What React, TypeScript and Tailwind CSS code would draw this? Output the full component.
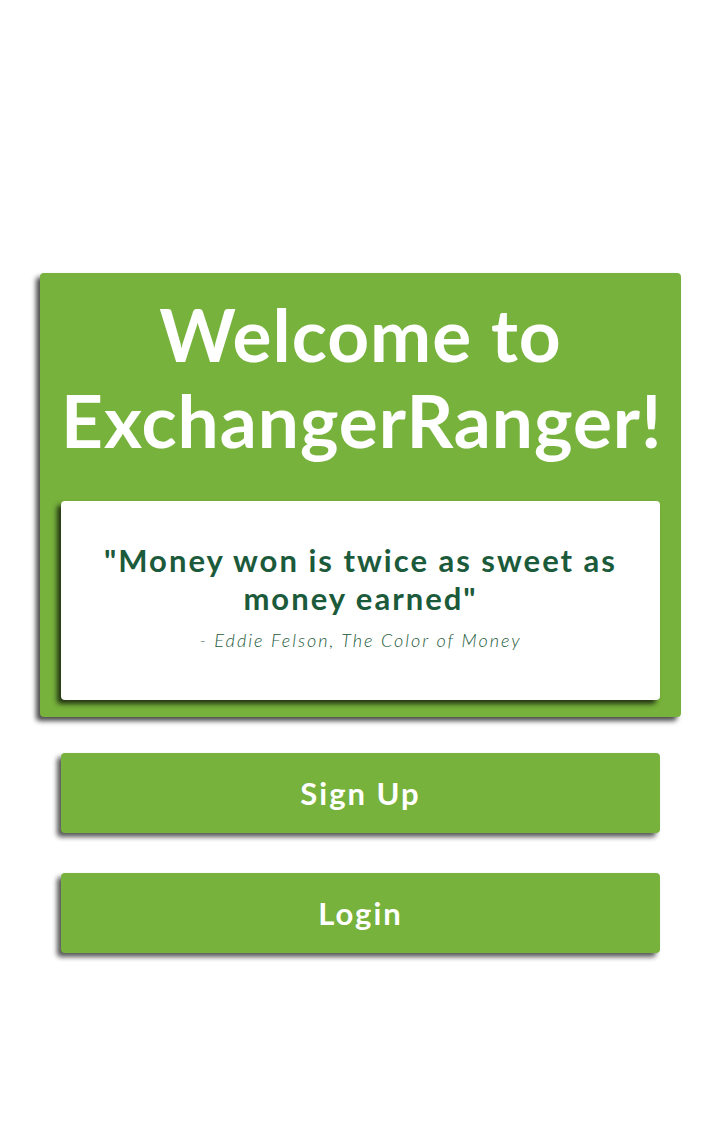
import React from 'react';

const App: React.FC = () => {
  return (
    <div className="min-h-[1146px] w-full bg-white font-['Lato','Open_Sans',sans-serif]">
      <div className="pt-[273px] pl-[40px] pr-[43px]">
        {/* Welcome card */}
        <div className="bg-[#77b23c] rounded-[4px] px-[21px] pt-[18px] pb-[17px] shadow-[-4px_4px_5px_rgba(0,0,0,0.7)]">
          <h1 className="text-white text-center font-bold text-[73px] leading-[86px] tracking-[1px] h-[210px] whitespace-nowrap">
            Welcome to
            <br />
            ExchangerRanger!
          </h1>
          <div className="bg-white rounded-[4px] h-[199px] flex flex-col items-center justify-center px-6 pb-[6px] shadow-[-4px_4px_5px_rgba(0,0,0,0.7)]">
            <p className="text-[#1b5a3a] text-center font-bold text-[31px] leading-[38px] tracking-[2px]">
              "Money won is twice as sweet as money earned"
            </p>
            <p className="text-[#1b5a3a] italic font-light text-[18px] tracking-[2px] mt-[10px]">
              - Eddie Felson, The Color of Money
            </p>
          </div>
        </div>

        {/* Actions */}
        <div className="px-[21px] pt-[36px] flex flex-col gap-[40px]">
          <button className="h-[80px] w-full rounded-[4px] bg-[#77b23c] text-white font-bold text-[31px] tracking-[2px] shadow-[-4px_4px_5px_rgba(0,0,0,0.65)]">
            Sign Up
          </button>
          <button className="h-[80px] w-full rounded-[4px] bg-[#77b23c] text-white font-bold text-[31px] tracking-[2px] shadow-[-4px_4px_5px_rgba(0,0,0,0.65)]">
            Login
          </button>
        </div>
      </div>
    </div>
  );
};

export default App;
